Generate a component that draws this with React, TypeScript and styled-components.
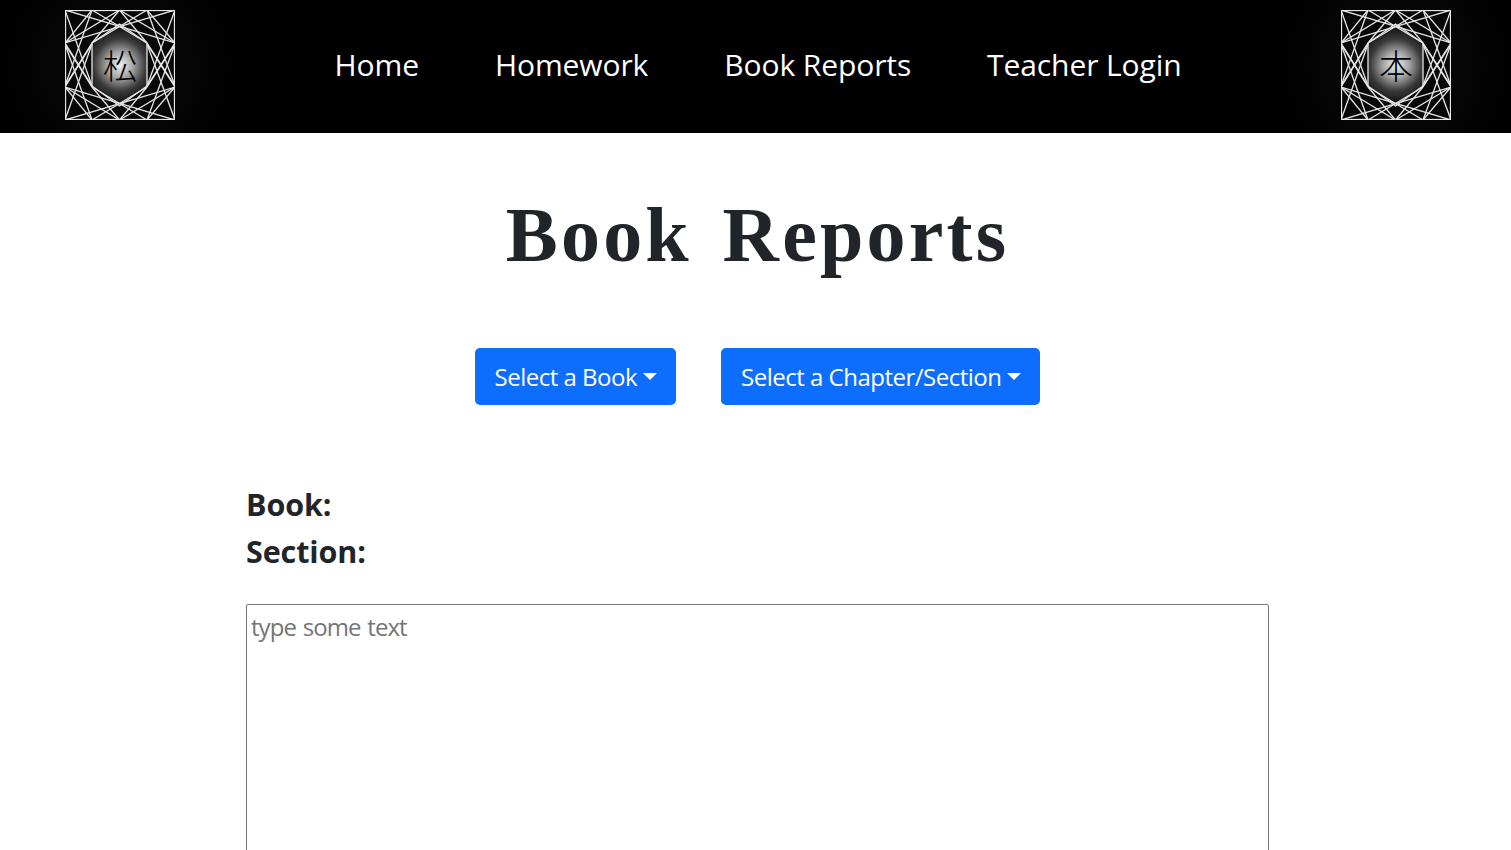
import styled, { createGlobalStyle } from "styled-components";

const GlobalStyle = createGlobalStyle`
  html, body {
    margin: 0;
    padding: 0;
    height: 100%;
    overflow: hidden;
    background: #fff;
  }
  body {
    font-family: "Open Sans", "Noto Sans", sans-serif;
    color: #212529;
  }
`;

const Header = styled.header`
  display: flex;
  justify-content: space-between;
  align-items: center;
  height: 133px;
  padding: 0 60px 0 65px;
  background:
    radial-gradient(circle 125px at 119px 65px, #0c0c0c, transparent 100%),
    radial-gradient(circle 125px at 1396px 65px, #0c0c0c, transparent 100%),
    #000;
`;

const Nav = styled.nav`
  display: flex;
  gap: 76px;
  margin-top: -4px;
`;

const NavLink = styled.a`
  color: #fff;
  font-size: 30px;
  line-height: 40px;
  letter-spacing: -0.1px;
  text-decoration: none;
`;

const LogoBox = styled.div`
  position: relative;
  width: 110px;
  height: 110px;
  flex: none;
  margin-top: -4px;
`;

const LogoGlyph = styled.span`
  position: absolute;
  inset: 0;
  display: flex;
  align-items: center;
  justify-content: center;
  color: #000;
  font-family: "Noto Sans CJK JP", sans-serif;
  font-size: 34px;
  font-weight: 300;
  line-height: 1;
`;

const Main = styled.main`
  display: flex;
  flex-direction: column;
  align-items: center;
  padding-left: 4px;
`;

const Title = styled.h1`
  margin: 60px 0 0;
  font-family: "Liberation Serif", serif;
  font-size: 78px;
  font-weight: 700;
  line-height: 84px;
  letter-spacing: 3.2px;
  word-spacing: 8px;
`;

const ButtonRow = styled.div`
  display: flex;
  gap: 45px;
  margin-top: 71px;
`;

const SelectButton = styled.button`
  display: flex;
  align-items: center;
  height: 57px;
  padding: 0 19px 0 20px;
  border: none;
  border-radius: 5px;
  background: #0d6efd;
  color: #fff;
  font-family: inherit;
  font-size: 24px;
  letter-spacing: -0.5px;
`;

const Caret = styled.span`
  width: 0;
  height: 0;
  margin-left: 6px;
  margin-top: -1px;
  border-top: 7px solid #fff;
  border-left: 7px solid transparent;
  border-right: 7px solid transparent;
`;

const Details = styled.section`
  width: 1023px;
  margin-top: 76px;
`;

const DetailLine = styled.div`
  font-size: 30.5px;
  font-weight: 700;
  line-height: 47px;
  letter-spacing: -0.1px;
`;

const TextBox = styled.textarea`
  display: block;
  box-sizing: border-box;
  width: 100%;
  height: 400px;
  margin-top: 29px;
  padding: 6px 4px;
  border: 1px solid #767676;
  border-radius: 2px;
  outline: none;
  resize: none;
  font-family: inherit;
  font-size: 24px;
  line-height: 32px;
  letter-spacing: -0.95px;
  word-spacing: 1.5px;

  &::placeholder {
    color: #757575;
    opacity: 1;
  }
`;

// strands of the upper half, mirrored to fill the 110 unit logo
const strands = [
  [0, 0, 110, 33],
  [27, 0, 82, 33],
  [82, 0, 27, 33],
  [110, 0, 0, 33],
  [27, 0, 0, 33],
  [82, 0, 110, 33],
  [54.5, 0, 0, 33],
  [54.5, 0, 110, 33],
  [54.5, 0, 27, 33],
  [54.5, 0, 82, 33],
  [27, 0, 0, 76],
  [0, 0, 27, 76],
  [0, 33, 27, 76],
  [0, 76, 27, 33],
  [82, 0, 110, 76],
  [110, 0, 82, 76],
  [110, 33, 82, 76],
  [110, 76, 82, 33],
];
const hex = "54.5,14 82,33 82,76 54.5,96 27,76 27,33";

function Logo({ id, glyph }: { id: string; glyph: string }) {
  return (
    <LogoBox>
      <svg width="110" height="110" viewBox="0 0 110 110">
        <defs>
          <radialGradient id={id} gradientUnits="userSpaceOnUse" cx="55" cy="55" r="42">
            <stop offset="0%" stopColor="#efefef" />
            <stop offset="30%" stopColor="#a8a8a8" />
            <stop offset="62%" stopColor="#3a3a3a" />
            <stop offset="100%" stopColor="#050505" />
          </radialGradient>
        </defs>
        <polygon points={hex} fill={`url(#${id})`} />
        <g stroke="#e6e6e6" strokeWidth="1.3" fill="none">
          {strands.map((s, i) => (
            <g key={i}>
              <line x1={s[0]} y1={s[1]} x2={s[2]} y2={s[3]} />
              <line x1={s[0]} y1={110 - s[1]} x2={s[2]} y2={110 - s[3]} />
            </g>
          ))}
          <polygon points={hex} />
          <rect x="0.5" y="0.5" width="109" height="109" />
        </g>
      </svg>
      <LogoGlyph>{glyph}</LogoGlyph>
    </LogoBox>
  );
}

export default function App() {
  return (
    <>
      <GlobalStyle />
      <Header>
        <Logo id="logoLeft" glyph="松" />
        <Nav>
          <NavLink href="#">Home</NavLink>
          <NavLink href="#">Homework</NavLink>
          <NavLink href="#">Book Reports</NavLink>
          <NavLink href="#">Teacher Login</NavLink>
        </Nav>
        <Logo id="logoRight" glyph="本" />
      </Header>
      <Main>
        <Title>Book Reports</Title>
        <ButtonRow>
          <SelectButton>
            Select a Book
            <Caret />
          </SelectButton>
          <SelectButton>
            Select a Chapter/Section
            <Caret />
          </SelectButton>
        </ButtonRow>
        <Details>
          <DetailLine>Book:</DetailLine>
          <DetailLine>Section:</DetailLine>
          <TextBox placeholder="type some text" />
        </Details>
      </Main>
    </>
  );
}
